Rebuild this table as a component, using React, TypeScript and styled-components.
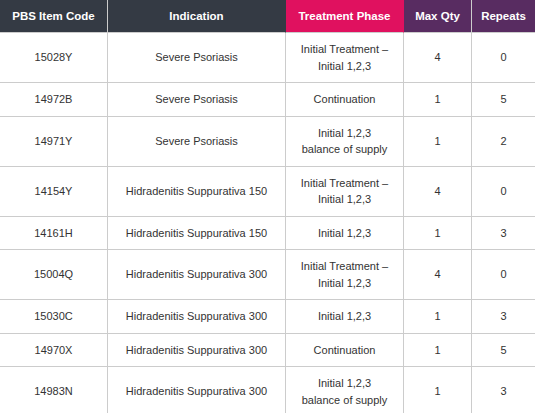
import React from 'react';
import styled, { createGlobalStyle } from 'styled-components';

const Global = createGlobalStyle`
  html,body{margin:0;padding:0;background:#fff}
  body{font-family:"Liberation Sans",Arial,sans-serif;overflow:hidden}
`;

const Table = styled.table`width:536px;border-collapse:separate;border-spacing:0;table-layout:fixed;font-size:11px;color:#333`;
const Th = styled.th<{ bg: string; line: string }>`
  background:${({ bg }) => bg};color:#fff;font-weight:700;font-size:11.5px;line-height:16px;padding:8px 4px;
  border-right:1px solid ${({ line }) => line};border-bottom:1px solid #ccc;text-align:center;box-sizing:border-box;
`;
const Td = styled.td`
  line-height:16.5px;padding:8px 6px 8px;text-align:center;vertical-align:middle;
  border-right:1px solid #ccc;border-bottom:1px solid #ccc;box-sizing:border-box;
`;

type Row = { code: string; ind: string; phase: string[]; qty: number; rep: number };

const rows: Row[] = [
  { code: '15028Y', ind: 'Severe Psoriasis', phase: ['Initial Treatment –', 'Initial 1,2,3'], qty: 4, rep: 0 },
  { code: '14972B', ind: 'Severe Psoriasis', phase: ['Continuation'], qty: 1, rep: 5 },
  { code: '14971Y', ind: 'Severe Psoriasis', phase: ['Initial 1,2,3', 'balance of supply'], qty: 1, rep: 2 },
  { code: '14154Y', ind: 'Hidradenitis Suppurativa 150', phase: ['Initial Treatment –', 'Initial 1,2,3'], qty: 4, rep: 0 },
  { code: '14161H', ind: 'Hidradenitis Suppurativa 150', phase: ['Initial 1,2,3'], qty: 1, rep: 3 },
  { code: '15004Q', ind: 'Hidradenitis Suppurativa 300', phase: ['Initial Treatment –', 'Initial 1,2,3'], qty: 4, rep: 0 },
  { code: '15030C', ind: 'Hidradenitis Suppurativa 300', phase: ['Initial 1,2,3'], qty: 1, rep: 3 },
  { code: '14970X', ind: 'Hidradenitis Suppurativa 300', phase: ['Continuation'], qty: 1, rep: 5 },
  { code: '14983N', ind: 'Hidradenitis Suppurativa 300', phase: ['Initial 1,2,3', 'balance of supply'], qty: 1, rep: 3 },
];

const DARK = '#343a44';
const PINK = '#e0115f';
const PURPLE = '#582c61';

export default function App() {
  return (
    <>
      <Global />
      <Table>
        <colgroup>
          <col style={{ width: 108 }} />
          <col style={{ width: 178 }} />
          <col style={{ width: 118 }} />
          <col style={{ width: 68 }} />
          <col style={{ width: 64 }} />
        </colgroup>
        <thead>
          <tr>
            <Th bg={DARK} line="#ccc">PBS Item Code</Th>
            <Th bg={DARK} line={DARK}>Indication</Th>
            <Th bg={PINK} line={PINK}>Treatment Phase</Th>
            <Th bg={PURPLE} line="#ccc">Max Qty</Th>
            <Th bg={PURPLE} line="#ccc">Repeats</Th>
          </tr>
        </thead>
        <tbody>
          {rows.map(r => (
            <tr key={r.code}>
              <Td>{r.code}</Td>
              <Td>{r.ind}</Td>
              <Td>{r.phase.map((p, i) => <React.Fragment key={i}>{i > 0 && <br />}{p}</React.Fragment>)}</Td>
              <Td>{r.qty}</Td>
              <Td>{r.rep}</Td>
            </tr>
          ))}
        </tbody>
      </Table>
    </>
  );
}
